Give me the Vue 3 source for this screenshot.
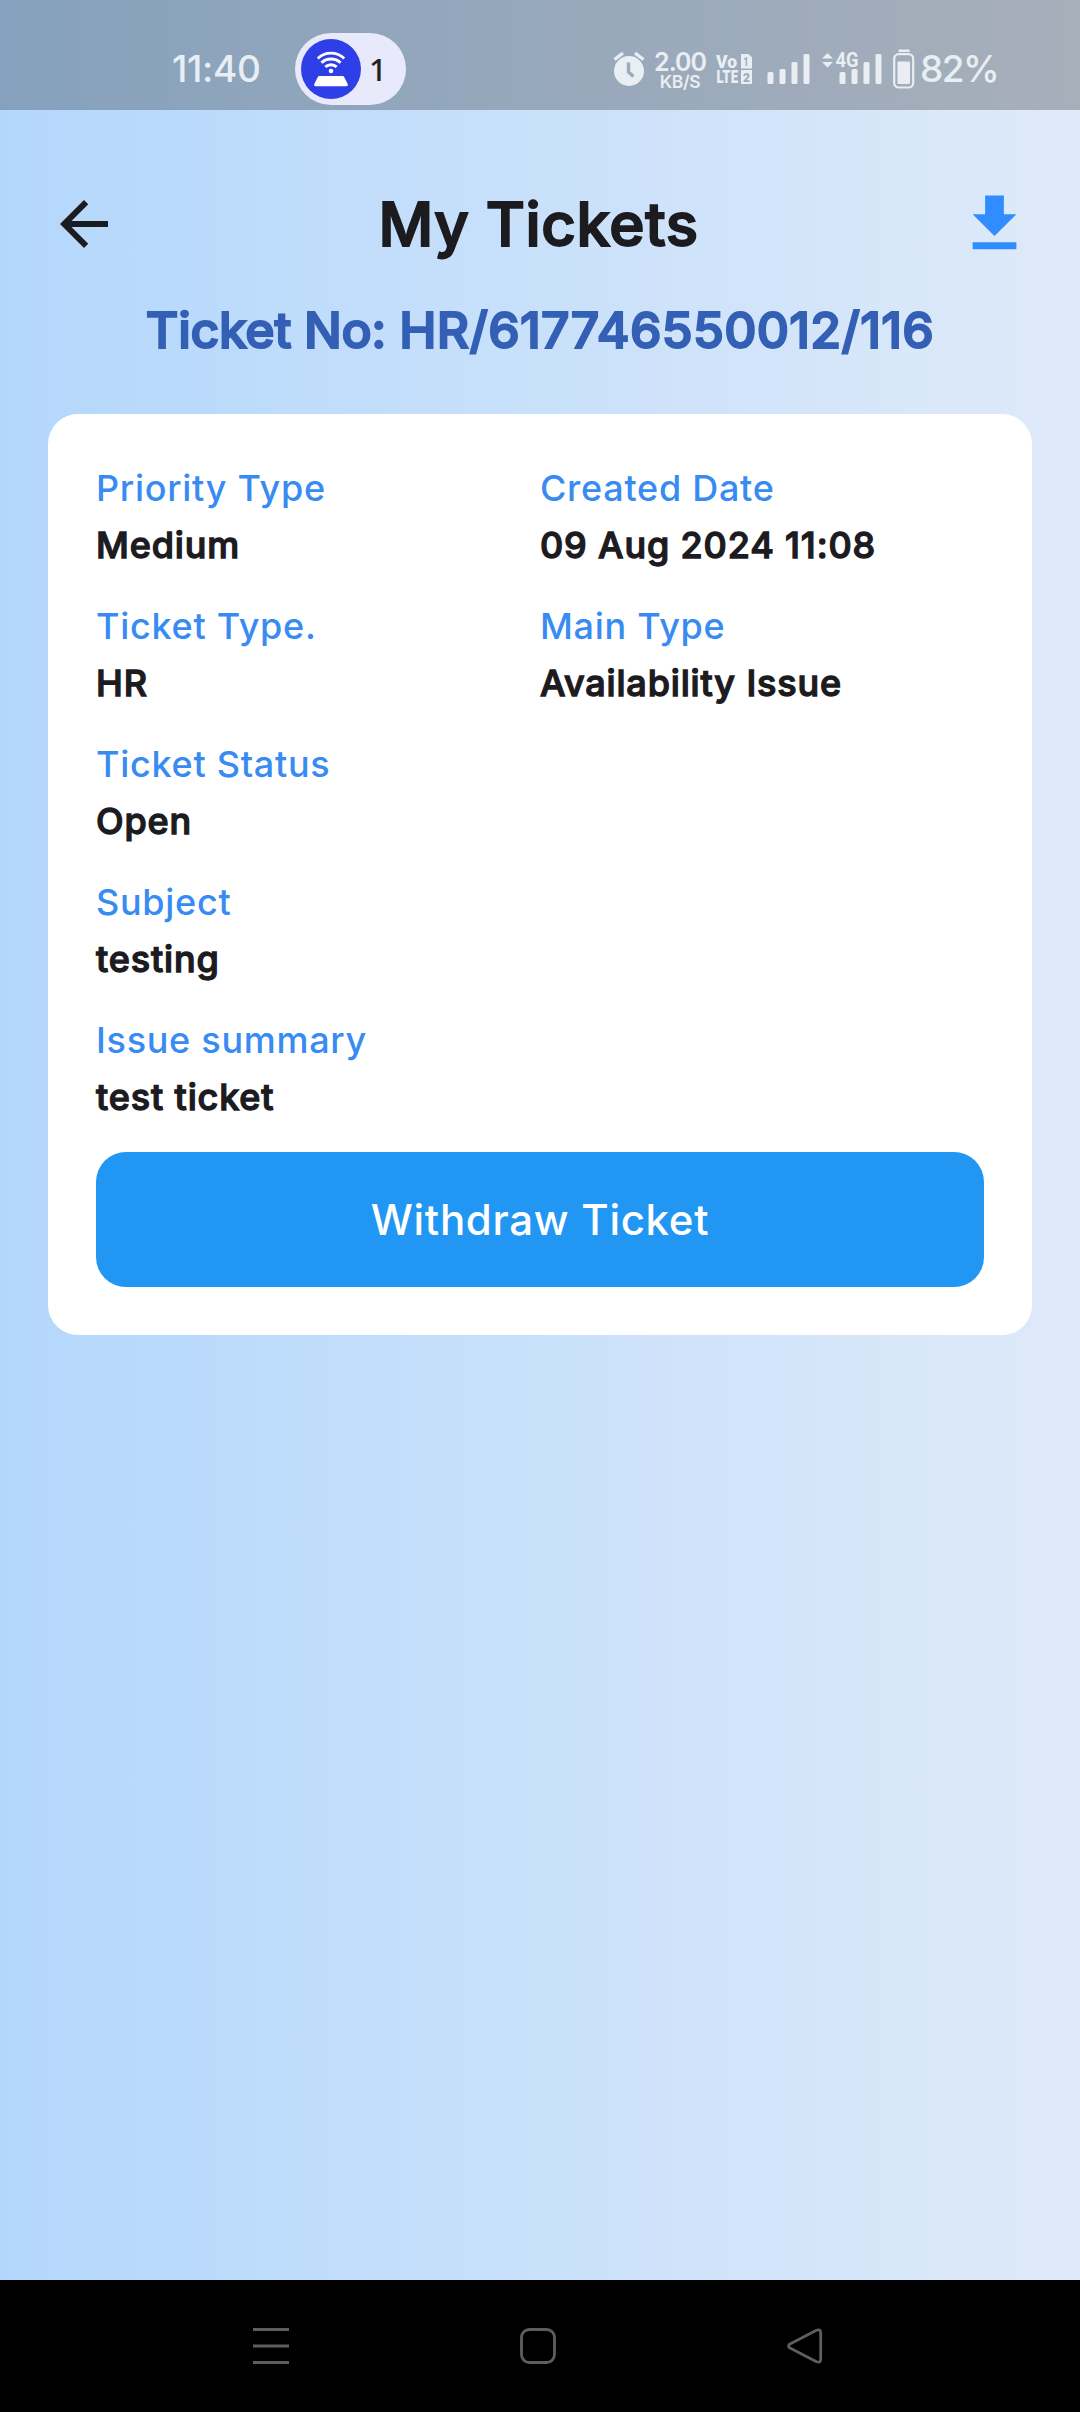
<script setup>
const ticketNo = 'HR/617746550012/116'

const fields = [
  { label: 'Priority Type', value: 'Medium' },
  { label: 'Created Date', value: '09 Aug 2024 11:08' },
  { label: 'Ticket Type.', value: 'HR' },
  { label: 'Main Type', value: 'Availability Issue' },
  { label: 'Ticket Status', value: 'Open', wide: true },
  { label: 'Subject', value: 'testing', wide: true },
  { label: 'Issue summary', value: 'test ticket', wide: true },
]
</script>

<template>
  <div class="screen">
    <div class="status-bar">
      <span class="clock">11:40</span>
      <div class="hotspot">
        <svg width="60" height="60" viewBox="0 0 60 60">
          <circle cx="30" cy="30" r="30" fill="#2f3fe8" />
          <g fill="none" stroke="#fff" stroke-width="2.8">
            <path d="M16.8 19.5a19 19 0 0 1 26.4 0" />
            <path d="M20.4 23.8a14 14 0 0 1 19.2 0" />
            <path d="M24.3 27.9a8.6 8.6 0 0 1 11.4 0" />
          </g>
          <circle cx="30" cy="32" r="2.3" fill="#fff" />
          <path d="M18.500 37h23q1.300 0 1.900 1.400l3.300 6.600q.6 2.200-1.500 2.200H14.800q-2.100 0-1.500-2.200l3.300-6.600q.6-1.400 1.900-1.400z" fill="#fff" />
        </svg>
        <span>1</span>
      </div>

      <div class="indicators">
        <svg class="alarm" width="32" height="36" viewBox="0 0 32 36">
          <circle cx="16" cy="20" r="15" fill="currentColor" />
          <path d="M1.5 8.5l8.5-6.5M30.5 8.5l-8.500-6.500" stroke="currentColor" stroke-width="3.4" />
          <path d="M15.5 11.5v9.500l5 4.500" fill="none" stroke="#9babbd" stroke-width="3.4" />
        </svg>
        <div class="speed">
          <span>2.00</span>
          <small>KB/S</small>
        </div>
        <svg class="volte" width="36" height="32" viewBox="0 0 36 32">
          <g fill="currentColor" font-family="Roboto, sans-serif" font-weight="900" font-size="19">
            <text x="0" y="14.5" textLength="21" lengthAdjust="spacingAndGlyphs">Vo</text>
            <text x="0.5" y="30" textLength="21.5" lengthAdjust="spacingAndGlyphs">LTE</text>
          </g>
          <path d="M25 1h7.500l3.500 3.500v11H25zM25 17h11v14H25z" fill="currentColor" />
          <g fill="#9fabba" font-family="Roboto, sans-serif" font-weight="900" font-size="13">
            <text x="27.5" y="13" textLength="5" lengthAdjust="spacingAndGlyphs">1</text>
            <text x="27" y="28.7" textLength="7" lengthAdjust="spacingAndGlyphs">2</text>
          </g>
        </svg>
        <svg class="signal" width="44" height="36" viewBox="0 0 44 36" fill="currentColor">
          <rect x="0.5" y="21" width="6" height="12" rx="1.5" />
          <rect x="12.5" y="18" width="6" height="15" rx="1.5" />
          <rect x="24.5" y="11" width="6" height="22" rx="1.5" />
          <rect x="36.5" y="3" width="6" height="30" rx="1.5" />
        </svg>
        <svg class="signal-4g" width="60" height="36" viewBox="0 0 60 36" fill="currentColor">
          <path d="M0 7.500l5.500-5.500 5.500 5.500zM0 11h11l-5.500 5.500z" />
          <text x="13.5" y="16" font-family="Roboto, sans-serif" font-weight="700" font-size="20" textLength="23" lengthAdjust="spacingAndGlyphs">4G</text>
          <rect x="17.5" y="21" width="6" height="12" rx="1.5" />
          <rect x="29.5" y="18" width="6" height="15" rx="1.5" />
          <rect x="41.5" y="11" width="6" height="22" rx="1.5" />
          <rect x="53.5" y="3" width="6" height="30" rx="1.5" />
        </svg>
        <svg class="battery" width="22" height="40" viewBox="0 0 22 40">
          <rect x="5.5" y="0.5" width="11" height="2.5" fill="currentColor" />
          <rect x="1.2" y="5.2" width="19" height="33.3" rx="4.5" fill="none" stroke="currentColor" stroke-width="2.2" />
          <rect x="4.5" y="12.5" width="12.5" height="22.5" rx="1" fill="currentColor" />
        </svg>
        <span class="percent">82%</span>
      </div>
    </div>

    <header class="app-bar">
      <svg width="72" height="72" viewBox="0 0 24 24" fill="#1c1b1f">
        <path d="M20 11H7.830l5.590-5.590L12 4l-8 8 8 8 1.410-1.410L7.830 13H20v-2z" />
      </svg>
      <h1>My Tickets</h1>
      <svg class="download" width="75" height="75" viewBox="0 0 24 24" fill="#308cff">
        <path d="M19 9h-4V3H9v6H5l7 7 7-7zM5 18v2.200h14V18H5z" />
      </svg>
    </header>

    <h2 class="ticket-no">Ticket No: <span>{{ ticketNo }}</span></h2>

    <section class="card">
      <dl class="fields">
        <div v-for="field in fields" :key="field.label" :class="{ wide: field.wide }">
          <dt>{{ field.label }}</dt>
          <dd>{{ field.value }}</dd>
        </div>
      </dl>
      <button class="withdraw" type="button">Withdraw Ticket</button>
    </section>

    <nav class="system-nav">
      <svg width="36" height="36" viewBox="0 0 36 36" stroke="#5e5e5e" stroke-width="3">
        <path d="M0 1.500h36M0 18h36M0 34.500h36" />
      </svg>
      <svg width="36" height="36" viewBox="0 0 36 36" fill="none" stroke="#5e5e5e" stroke-width="2.8">
        <rect x="1.5" y="1.5" width="33" height="33" rx="8" />
      </svg>
      <svg width="36" height="36" viewBox="0 0 36 36" fill="none" stroke="#5e5e5e" stroke-width="2.8" stroke-linejoin="round">
        <path d="M2.500 16.300L29.500 2.200Q33.500 0.800 33.700 4.500V31.500Q33.500 35.200 29.500 33.800L2.500 19.700Q0.700 18 2.500 16.300z" />
      </svg>
    </nav>
  </div>
</template>

<style>
body {
  margin: 0;
}
</style>

<style scoped>
.screen {
  display: flex;
  flex-direction: column;
  width: 1080px;
  height: 2412px;
  overflow: hidden;
  background: linear-gradient(90deg, #b3d7fc, #dfeaf9);
  color: #1c1b1f;
  font-family: Inter, sans-serif;
  font-weight: 500;
}

svg {
  display: block;
  flex: none;
  overflow: visible;
}

.status-bar {
  display: flex;
  align-items: center;
  box-sizing: border-box;
  height: 110px;
  padding: 28px 0 0 172px;
  background: rgba(0, 0, 0, 0.25);
  color: #e9eef3;
}

.clock {
  width: 123px;
  margin-bottom: 2px;
  font-size: 37px;
  letter-spacing: -0.3px;
}

.hotspot {
  display: flex;
  align-items: center;
  gap: 8px;
  box-sizing: border-box;
  width: 111px;
  height: 72px;
  padding-left: 6px;
  border-radius: 36px;
  background: #e8eafb;
  color: #222;
  font-family: "Noto Sans", sans-serif;
  font-size: 31px;
}

.indicators {
  display: flex;
  align-items: flex-start;
  height: 40px;
  margin-left: 207px;
}

.alarm {
  margin-top: 2px;
}

.speed {
  display: flex;
  flex-direction: column;
  align-items: center;
  width: 52px;
  margin-left: 9px;
  margin-top: 2px;
  font-weight: 600;
}

.speed span {
  font-size: 25px;
  line-height: 22px;
  letter-spacing: -1px;
}

.speed small {
  font-size: 17.5px;
  line-height: 17px;
  letter-spacing: -0.3px;
}

.volte {
  margin: 4px 0 0 10px;
}

.signal {
  margin: 2px 0 0 15px;
}

.signal-4g {
  margin: 2px 0 0 11px;
}

.battery {
  margin-left: 11px;
}

.percent {
  margin-left: 5px;
  font-size: 37px;
  line-height: 39px;
  letter-spacing: -1.5px;
}

.app-bar {
  display: flex;
  align-items: center;
  justify-content: space-between;
  height: 74px;
  margin-top: 77px;
  padding: 0 48px;
}

.download {
  margin-top: -2px;
}

h1,
h2,
dd {
  margin: 0;
  font-weight: 500;
}

h1 {
  font-size: 60px;
  line-height: 72px;
  letter-spacing: 0.6px;
  -webkit-text-stroke: 2px #1c1b1f;
}

.ticket-no {
  margin-top: 38px;
  color: #335fb5;
  font-size: 50px;
  line-height: 62px;
  letter-spacing: -0.35px;
  text-align: center;
  -webkit-text-stroke: 2px #335fb5;
}

.ticket-no span {
  letter-spacing: 0.3px;
}

.card {
  box-sizing: border-box;
  margin: 53px 48px 0;
  padding: 52px 48px 48px;
  border-radius: 30px;
  background: #fff;
}

.fields {
  display: grid;
  grid-template-columns: 1fr 1fr;
  row-gap: 37px;
  margin: 0;
}

.wide {
  grid-column: 1 / -1;
}

dt {
  color: #388bf2;
  font-size: 36px;
  line-height: 44px;
  letter-spacing: 0.72px;
}

dd {
  margin-top: 13px;
  font-size: 36px;
  line-height: 44px;
  letter-spacing: 0.85px;
  -webkit-text-stroke: 1.3px #1c1b1f;
}

.withdraw {
  display: block;
  width: 100%;
  height: 135px;
  margin-top: 33px;
  padding: 0;
  border: 0;
  border-radius: 30px;
  background: #2196f3;
  color: #fff;
  font-family: inherit;
  font-size: 42px;
  font-weight: 500;
  letter-spacing: 0.7px;
}

.system-nav {
  display: flex;
  align-items: center;
  justify-content: space-between;
  box-sizing: border-box;
  height: 132px;
  margin-top: auto;
  padding: 0 257px 0 253px;
  background: #000;
}
</style>
